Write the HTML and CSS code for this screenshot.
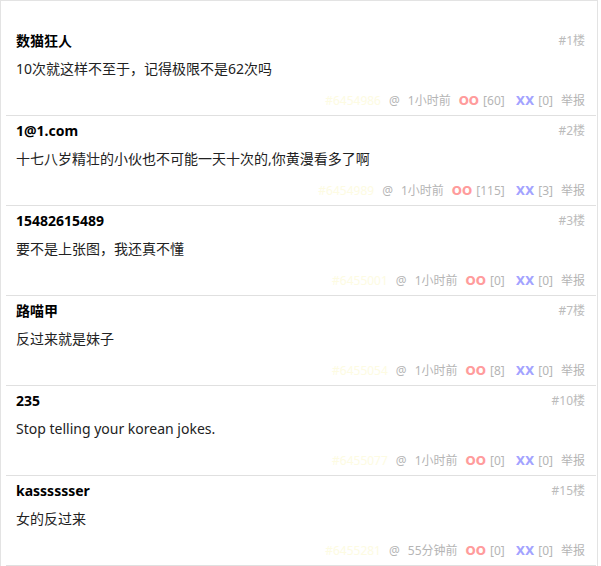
FILE: index.html
```html
<!DOCTYPE html>
<html lang="zh-CN">
<head>
<meta charset="utf-8">
<title>评论</title>
<link rel="stylesheet" href="styles.css">
</head>
<body>
<div class="comments">
  <div class="item">
    <div class="head"><span class="name">数猫狂人</span><span class="floor">#1楼</span></div>
    <div class="text">10次就这样不至于，记得极限不是62次吗</div>
    <div class="foot"><span class="cid">#6454986</span><span class="at">@</span><span class="time">1小时前</span><span class="vote"><b class="oo">OO</b><span class="cnt">[60]</span></span><span class="vote"><b class="xx">XX</b><span class="cnt">[0]</span></span><span class="report">举报</span></div>
  </div>
  <div class="item">
    <div class="head"><span class="name">1@1.com</span><span class="floor">#2楼</span></div>
    <div class="text">十七八岁精壮的小伙也不可能一天十次的,你黄漫看多了啊</div>
    <div class="foot"><span class="cid">#6454989</span><span class="at">@</span><span class="time">1小时前</span><span class="vote"><b class="oo">OO</b><span class="cnt">[115]</span></span><span class="vote"><b class="xx">XX</b><span class="cnt">[3]</span></span><span class="report">举报</span></div>
  </div>
  <div class="item">
    <div class="head"><span class="name">15482615489</span><span class="floor">#3楼</span></div>
    <div class="text">要不是上张图，我还真不懂</div>
    <div class="foot"><span class="cid">#6455001</span><span class="at">@</span><span class="time">1小时前</span><span class="vote"><b class="oo">OO</b><span class="cnt">[0]</span></span><span class="vote"><b class="xx">XX</b><span class="cnt">[0]</span></span><span class="report">举报</span></div>
  </div>
  <div class="item">
    <div class="head"><span class="name">路喵甲</span><span class="floor">#7楼</span></div>
    <div class="text">反过来就是妹子</div>
    <div class="foot"><span class="cid">#6455054</span><span class="at">@</span><span class="time">1小时前</span><span class="vote"><b class="oo">OO</b><span class="cnt">[8]</span></span><span class="vote"><b class="xx">XX</b><span class="cnt">[0]</span></span><span class="report">举报</span></div>
  </div>
  <div class="item">
    <div class="head"><span class="name">235</span><span class="floor">#10楼</span></div>
    <div class="text">Stop telling your korean jokes.</div>
    <div class="foot"><span class="cid">#6455077</span><span class="at">@</span><span class="time">1小时前</span><span class="vote"><b class="oo">OO</b><span class="cnt">[0]</span></span><span class="vote"><b class="xx">XX</b><span class="cnt">[0]</span></span><span class="report">举报</span></div>
  </div>
  <div class="item">
    <div class="head"><span class="name">kasssssser</span><span class="floor">#15楼</span></div>
    <div class="text">女的反过来</div>
    <div class="foot"><span class="cid">#6455281</span><span class="at">@</span><span class="time">55分钟前</span><span class="vote"><b class="oo">OO</b><span class="cnt">[0]</span></span><span class="vote"><b class="xx">XX</b><span class="cnt">[0]</span></span><span class="report">举报</span></div>
  </div>
</div>
</body>
</html>
```

FILE: styles.css
```css
html, body {
  margin: 0;
  padding: 0;
  background: #fff;
}
body {
  font-family: "Noto Sans", "Noto Sans CJK SC", sans-serif;
  color: #222;
}
.comments {
  box-sizing: border-box;
  width: 598px;
  border: 1px solid #e3e3e3;
  border-bottom: none;
  padding-top: 25px;
}
.item {
  margin: 0 1px 0 5px;
  padding: 4px 11px 5px 10px;
  border-bottom: 1px solid #e0e0e0;
}
.head {
  display: flex;
  justify-content: space-between;
  align-items: center;
  height: 20px;
}
.name {
  font-size: 14px;
  font-weight: bold;
  color: #000;
}
.floor {
  font-size: 12px;
  color: #bbb;
}
.text {
  margin-top: 9px;
  font-size: 14px;
  line-height: 20px;
  color: #222;
}
.foot {
  margin-top: 11px;
  height: 20px;
  display: flex;
  justify-content: flex-end;
  align-items: center;
  gap: 8px;
  font-size: 12px;
  color: #b5b5b5;
}
.cid {
  color: #fdfbe2;
}
.vote {
  display: flex;
  align-items: baseline;
  gap: 4px;
}
.oo,
.xx {
  font-family: "DejaVu Sans", sans-serif;
  font-size: 12px;
}
.oo {
  color: #ff9c9c;
}
.xx {
  color: #a3a3ff;
}
.vote + .vote {
  margin-left: 3px;
}
```
